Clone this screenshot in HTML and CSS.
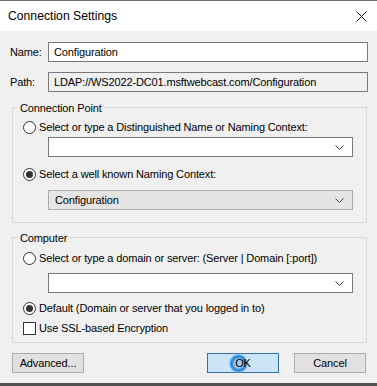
FILE: index.html
```html
<!DOCTYPE html>
<html>
<head>
<meta charset="utf-8">
<link rel="stylesheet" href="styles.css">
</head>
<body>
<div class="window">
  <div class="titlebar">
    <span class="title">Connection Settings</span>
    <svg class="close" width="11" height="11" viewBox="0 0 11 11"><path d="M0.5 0.5 L10.5 10.5 M10.5 0.5 L0.5 10.5" stroke="#111" stroke-width="1" fill="none"/></svg>
  </div>
  <div class="content">
    <div class="field-row">
      <span class="field-label">Name:</span>
      <div class="textbox">Configuration</div>
    </div>
    <div class="field-row path-row">
      <span class="field-label">Path:</span>
      <div class="textbox readonly">LDAP://WS2022-DC01.msftwebcast.com/Configuration</div>
    </div>

    <div class="group group-connection">
      <div class="legend">Connection Point</div>
      <div class="option opt-first"><span class="radio"></span><span>Select or type a Distinguished Name or Naming Context:</span></div>
      <div class="combo combo-tight"><span class="combo-value"></span><svg class="chev" width="9" height="5" viewBox="0 0 9 5"><path d="M0.5 0.5 L4.5 4.5 L8.5 0.5" stroke="#444" fill="none"/></svg></div>
      <div class="option opt-mid"><span class="radio checked"></span><span>Select a well known Naming Context:</span></div>
      <div class="combo disabled combo-gap"><span class="combo-value">Configuration</span><svg class="chev" width="9" height="5" viewBox="0 0 9 5"><path d="M0.5 0.5 L4.5 4.5 L8.5 0.5" stroke="#444" fill="none"/></svg></div>
    </div>

    <div class="group group-computer">
      <div class="legend">Computer</div>
      <div class="option opt-first2"><span class="radio"></span><span>Select or type a domain or server: (Server | Domain [:port])</span></div>
      <div class="combo combo-loose"><span class="combo-value"></span><svg class="chev" width="9" height="5" viewBox="0 0 9 5"><path d="M0.5 0.5 L4.5 4.5 L8.5 0.5" stroke="#444" fill="none"/></svg></div>
      <div class="option opt-after-combo"><span class="radio checked"></span><span>Default (Domain or server that you logged in to)</span></div>
      <div class="option opt-check"><span class="checkbox"></span><span>Use SSL-based Encryption</span></div>
    </div>

    <div class="buttons">
      <button class="btn btn-advanced">Advanced...</button>
      <span class="spacer"></span>
      <button class="btn btn-default"><span class="click-mark"></span><span class="btn-label">OK</span></button>
      <button class="btn btn-cancel">Cancel</button>
    </div>
  </div>
</div>
</body>
</html>
```

FILE: styles.css
```css
* { box-sizing: border-box; }
html, body { margin: 0; padding: 0; }
body {
  width: 377px;
  height: 386px;
  overflow: hidden;
  font-family: "Liberation Sans", Arial, sans-serif;
  font-size: 11px;
  letter-spacing: -0.13px;
  color: #000;
}
.window {
  width: 377px;
  height: 386px;
  display: flex;
  flex-direction: column;
  border-top: 1px solid #6e6e6e;
  border-bottom: 3px solid #505050;
  background: #f0f0f0;
}
.titlebar {
  height: 30px;
  flex: none;
  background: #fff;
  display: flex;
  align-items: center;
  padding-left: 8px;
  padding-right: 10px;
}
.title {
  font-size: 12.2px;
  letter-spacing: 0;
  flex: 1;
  padding-bottom: 1px;
}
.close { display: block; }
.content {
  flex: 1;
  display: flex;
  flex-direction: column;
  padding: 11px 9px 0 10px;
}
.field-row {
  display: flex;
  align-items: center;
  height: 20px;
}
.path-row { margin-top: 10px; }
.field-label { width: 38px; flex: none; }
.textbox {
  flex: 1;
  height: 20px;
  border: 1px solid #7a7a7a;
  background: #fff;
  padding: 0 5px;
  display: flex;
  align-items: center;
  white-space: nowrap;
}
.textbox.readonly { background: #f0f0f0; }

.group {
  margin: 15px 1px 0 2px;
  border: 1px solid #d8d8d8;
  display: flex;
  flex-direction: column;
  align-items: flex-start;
}
.group-connection { padding-bottom: 12px; }
.group-computer { margin-top: 14px; padding-bottom: 6px; }
.legend {
  margin-top: -8px;
  margin-left: 5px;
  padding: 0 2px;
  height: 16px;
  line-height: 16px;
  background: #f0f0f0;
}
.option {
  display: flex;
  align-items: center;
  height: 16px;
  padding-left: 10px;
  gap: 3px;
  white-space: nowrap;
}
.opt-first { margin-top: 3px; }
.opt-mid { margin-top: 9px; }
.opt-first2 { margin-top: 4px; }
.opt-after-combo { margin-top: 7px; }
.opt-check { margin-top: 4px; }
.radio {
  width: 13px;
  height: 13px;
  flex: none;
  border: 1px solid #333;
  border-radius: 50%;
  background: #fff;
  display: flex;
  align-items: center;
  justify-content: center;
}
.radio.checked::after {
  content: "";
  width: 7px;
  height: 7px;
  border-radius: 50%;
  background: #333;
}
.checkbox {
  width: 13px;
  height: 13px;
  flex: none;
  border: 1px solid #333;
  background: #fff;
}
.combo {
  margin-left: 35px;
  width: 305px;
  height: 20px;
  border: 1px solid #7a7a7a;
  background: #fff;
  display: flex;
  align-items: center;
  padding: 0 8px 0 6px;
}
.combo-tight { margin-top: 2px; }
.combo-gap { margin-top: 8px; }
.combo-loose { margin-top: 7px; }
.combo.disabled { background: #e5e5e5; border-color: #adadad; }
.combo-value { flex: 1; }
.chev { display: block; }

.buttons {
  display: flex;
  margin: 10px 2px 0 2px;
  gap: 15px;
}
.spacer { flex: 1; }
.btn {
  font: inherit;
  letter-spacing: inherit;
  color: #000;
  width: 72px;
  height: 20px;
  padding: 0;
  border: 1px solid #adadad;
  background: #e1e1e1;
  position: relative;
}
.btn-default {
  background: #cce4f7;
  border-color: #2f6fad;
}
.btn-label { position: relative; }
.click-mark {
  position: absolute;
  left: 22px;
  top: 1px;
  width: 17px;
  height: 17px;
  border-radius: 50%;
  background: radial-gradient(circle, #9ccbf2 0 35%, #2a86d8 55%, #5aa6e6 100%);
  box-shadow: 0 0 0 1px rgba(120, 180, 235, 0.6);
}
```
